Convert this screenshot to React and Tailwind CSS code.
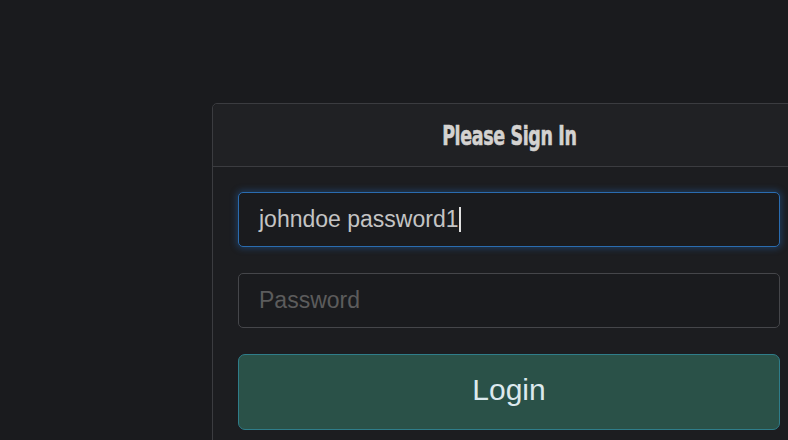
export default function App() {
  return (
    <div className="min-h-[440px] h-[440px] overflow-hidden bg-[#1a1b1e] pt-[103px] pl-[212px]" style={{ fontFamily: '"Liberation Sans", Arial, sans-serif' }}>
      <div className="w-[594px] rounded-t-[5px] border border-[#3b3c40] bg-[#1c1d20]">
        <div className="flex h-[63px] items-center justify-center border-b border-[#3b3c40] bg-[#202124] rounded-t-[5px]">
          <h3 className="text-[27px] font-bold leading-none tracking-[-0.5px] text-[#d4d2d0] scale-x-[0.72] [-webkit-text-stroke:0.6px_#d4d2d0]" style={{ fontFamily: '"Liberation Sans Narrow", "DejaVu Sans Condensed", sans-serif' }}>
            Please Sign In
          </h3>
        </div>
        <div className="flex flex-col gap-[26px] px-[25px] pt-[25px] pb-[20px]">
          <div className="flex h-[55px] items-center rounded-[5px] border border-[#2a6cb0] bg-[#1a1b1e] px-[20px] shadow-[0_0_6px_2px_rgba(40,110,190,0.35)]">
            <span className="text-[23px] text-[#c4c4c4]">johndoe password1</span>
            <span className="ml-[1px] h-[25px] w-[1.5px] bg-[#e0e0e0]" />
          </div>
          <div className="flex h-[55px] items-center rounded-[5px] border border-[#45464a] bg-[#1a1b1e] px-[20px]">
            <span className="text-[23px] text-[#5c5c5c]">Password</span>
          </div>
          <button className="flex h-[76px] w-full items-center justify-center rounded-[7px] border border-[#2f7d8a] bg-[#2a5148] pb-[5px] text-[30px] text-[#dce9ee]">
            Login
          </button>
        </div>
      </div>
    </div>
  );
}
